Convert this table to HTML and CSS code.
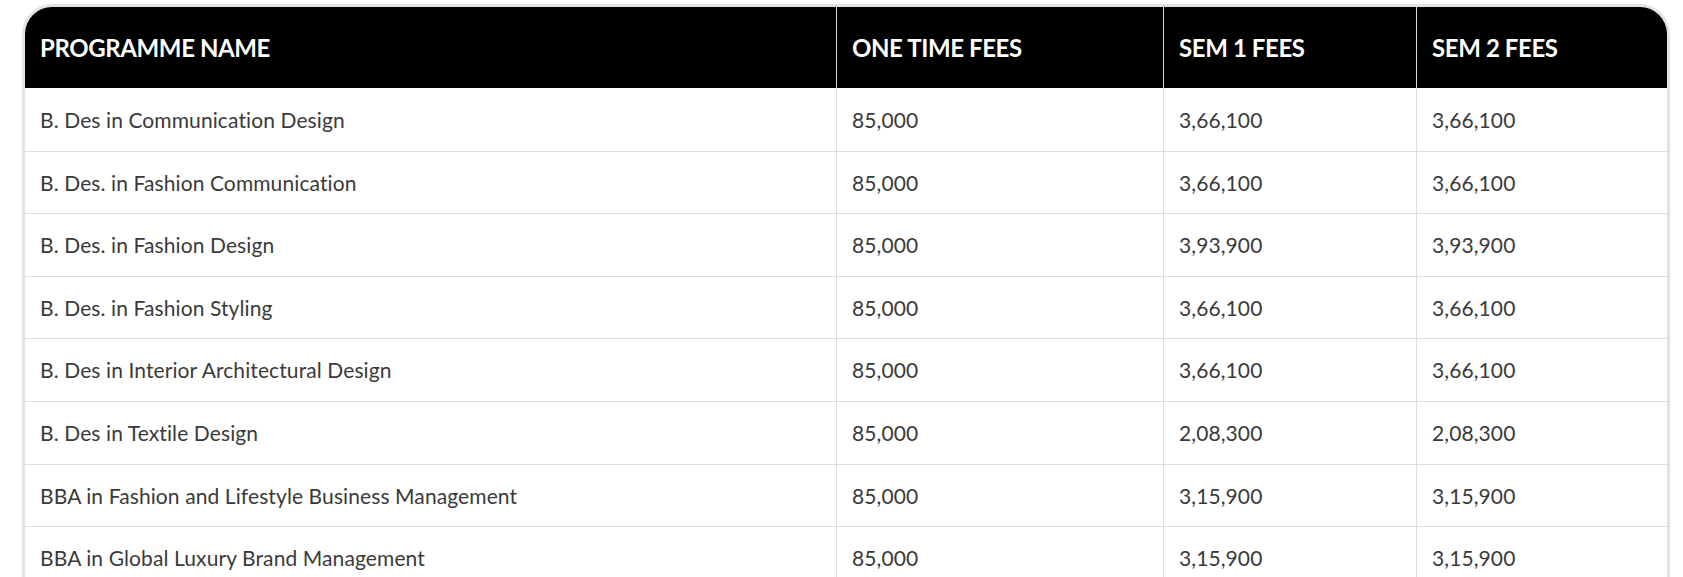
FILE: index.html
```html
<!DOCTYPE html>
<html lang="en">
<head>
<meta charset="utf-8">
<title>Programme Fees</title>
<link rel="stylesheet" href="styles.css">
</head>
<body>
<div class="page">
  <div class="table-wrap">
    <table class="fees">
      <colgroup>
        <col class="c-name">
        <col class="c-one">
        <col class="c-sem1">
        <col class="c-sem2">
      </colgroup>
      <thead>
        <tr>
          <th>PROGRAMME NAME</th>
          <th>ONE TIME FEES</th>
          <th>SEM 1 FEES</th>
          <th>SEM 2 FEES</th>
        </tr>
      </thead>
      <tbody>
        <tr><td>B. Des in Communication Design</td><td>85,000</td><td>3,66,100</td><td>3,66,100</td></tr>
        <tr><td>B. Des. in Fashion Communication</td><td>85,000</td><td>3,66,100</td><td>3,66,100</td></tr>
        <tr><td>B. Des. in Fashion Design</td><td>85,000</td><td>3,93,900</td><td>3,93,900</td></tr>
        <tr><td>B. Des. in Fashion Styling</td><td>85,000</td><td>3,66,100</td><td>3,66,100</td></tr>
        <tr><td>B. Des in Interior Architectural Design</td><td>85,000</td><td>3,66,100</td><td>3,66,100</td></tr>
        <tr><td>B. Des in Textile Design</td><td>85,000</td><td>2,08,300</td><td>2,08,300</td></tr>
        <tr><td>BBA in Fashion and Lifestyle Business Management</td><td>85,000</td><td>3,15,900</td><td>3,15,900</td></tr>
        <tr><td>BBA in Global Luxury Brand Management</td><td>85,000</td><td>3,15,900</td><td>3,15,900</td></tr>
      </tbody>
    </table>
  </div>
</div>
</body>
</html>
```
FILE: styles.css
```css
html, body {
  margin: 0;
  padding: 0;
  background: #ffffff;
}

body {
  font-family: Lato, "Noto Sans", sans-serif;
  font-variant-ligatures: none;
  color: #333333;
  overflow: hidden;
}

.page {
  padding: 4px 13px 0 22px;
}

.table-wrap {
  border: 3px solid #e3e3e3;
  border-bottom: none;
  border-radius: 30px 30px 0 0;
  overflow: hidden;
}

.fees {
  width: 100%;
  border-collapse: separate;
  border-spacing: 0;
  table-layout: fixed;
}

.c-name { width: 811px; }
.c-one { width: 327px; }
.c-sem1 { width: 253px; }
.c-sem2 { width: auto; }

.fees th {
  background: #000000;
  color: #ffffff;
  font-weight: 700;
  font-size: 24px;
  letter-spacing: -0.4px;
  text-align: left;
  line-height: 33px;
  padding: 24px 15px;
  border-left: 1px solid #d9d9d9;
}

.fees td {
  font-size: 21px;
  font-weight: 400;
  letter-spacing: 0.1px;
  color: #3a3a3a;
  line-height: 29.6px;
  padding: 16px 15px;
  border-top: 1px solid #dddddd;
  border-left: 1px solid #dddddd;
}

.fees tbody tr:first-child td {
  border-top: none;
  padding-top: 17px;
}

.fees th:first-child,
.fees td:first-child {
  border-left: none;
}
```
